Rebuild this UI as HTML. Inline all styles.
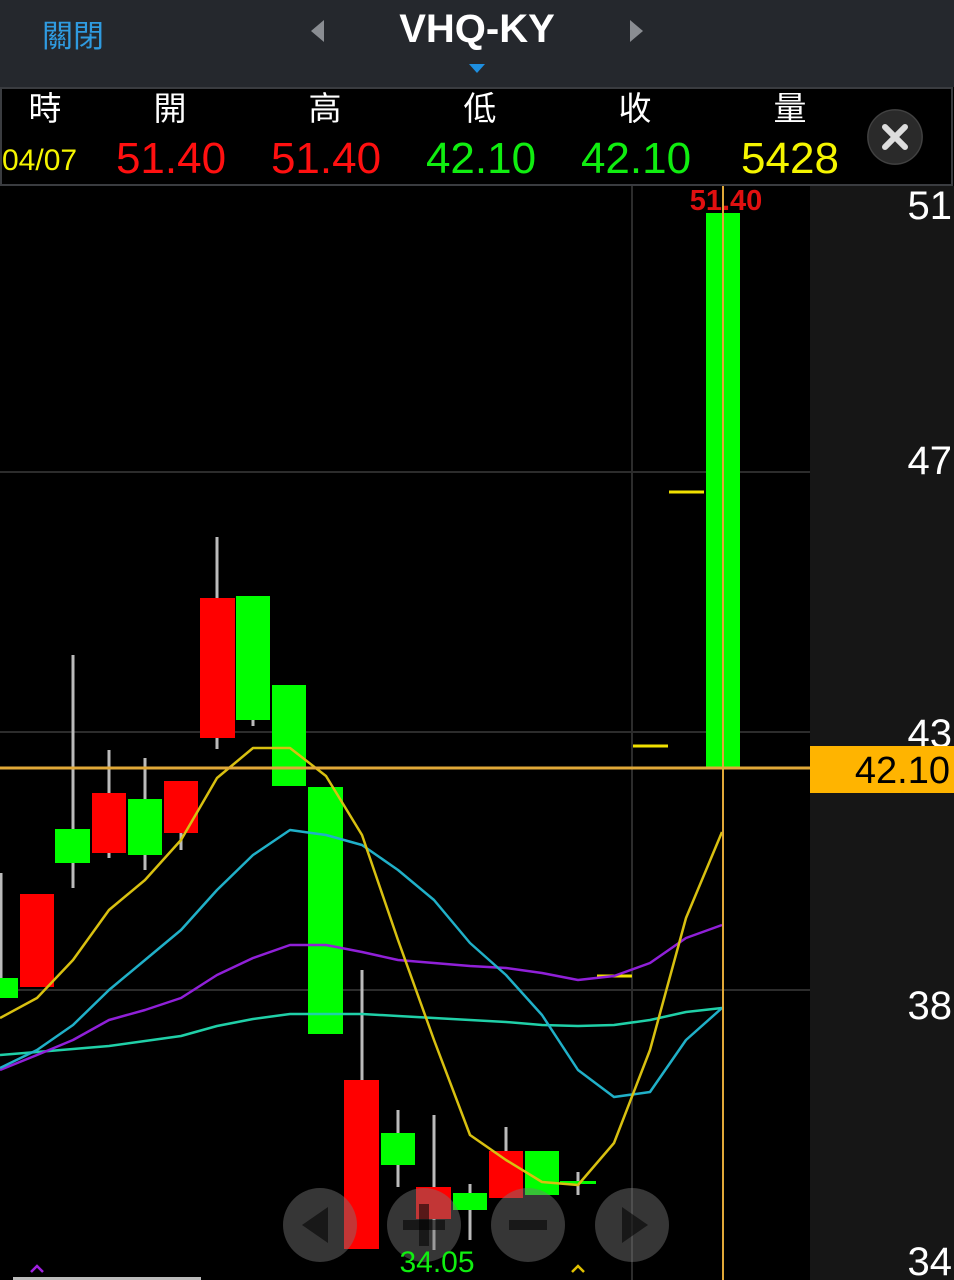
<!DOCTYPE html>
<html><head><meta charset="utf-8"><style>
body{margin:0;width:954px;height:1280px;overflow:hidden;background:#000;font-family:"Liberation Sans","Noto Sans CJK TC",sans-serif;}
</style></head><body>
<svg width="954" height="1280" xmlns="http://www.w3.org/2000/svg" style="position:absolute;left:0;top:0;font-family:'Liberation Sans','Noto Sans CJK TC',sans-serif">
<rect x="0" y="0" width="954" height="87" fill="#25282d"/>
<text x="42" y="47" font-size="31" fill="#2f9be0">關閉</text>
<polygon points="324,20 324,42 311,31" fill="#8a8d92"/>
<polygon points="630,20 630,42 643,31" fill="#8a8d92"/>
<text x="477" y="42" font-size="40" font-weight="bold" fill="#fff" text-anchor="middle">VHQ-KY</text>
<polygon points="469,64 485,64 477,73" fill="#1e8fe0"/>
<rect x="1" y="88" width="951" height="97" fill="#000" stroke="#3a3c40" stroke-width="2"/>
<g font-size="33" fill="#fff" text-anchor="middle">
<text x="45" y="120">時</text><text x="170" y="120">開</text><text x="325" y="120">高</text><text x="480" y="120">低</text><text x="635" y="120">收</text><text x="790" y="120">量</text>
</g>
<text x="2" y="170" font-size="30" fill="#f5f500">04/07</text>
<g font-size="44" text-anchor="middle">
<text x="171" y="173" fill="#ff1010">51.40</text><text x="326" y="173" fill="#ff1010">51.40</text>
<text x="481" y="173" fill="#10ee10">42.10</text><text x="636" y="173" fill="#10ee10">42.10</text>
<text x="790" y="173" fill="#f5f500">5428</text>
</g>
<circle cx="895" cy="137" r="28" fill="#333"/>
<circle cx="895" cy="137" r="27" fill="#2a2a2a" stroke="#444" stroke-width="1"/>
<path d="M885 127 L905 147 M905 127 L885 147" stroke="#ddd" stroke-width="6" stroke-linecap="round"/>
<rect x="810" y="186" width="144" height="1094" fill="#161616"/>
<g stroke="#2c2c2c" stroke-width="2">
<line x1="0" y1="472" x2="810" y2="472"/><line x1="0" y1="732" x2="810" y2="732"/><line x1="0" y1="990" x2="810" y2="990"/>
<line x1="632" y1="186" x2="632" y2="1280"/>
</g>
<g font-size="40" fill="#fff" text-anchor="end">
<text x="952" y="219">51</text><text x="952" y="474">47</text><text x="952" y="747">43</text><text x="952" y="1019">38</text><text x="952" y="1275">34</text>
</g>
<g stroke="#bbb" stroke-width="3">
<line x1="1" y1="873" x2="1" y2="998"/><line x1="73" y1="655" x2="73" y2="888"/><line x1="109" y1="750" x2="109" y2="858"/>
<line x1="145" y1="758" x2="145" y2="870"/><line x1="181" y1="781" x2="181" y2="850"/><line x1="217" y1="537" x2="217" y2="749"/>
<line x1="253" y1="596" x2="253" y2="726"/><line x1="362" y1="970" x2="362" y2="1249"/><line x1="398" y1="1110" x2="398" y2="1187"/>
<line x1="434" y1="1115" x2="434" y2="1250"/><line x1="470" y1="1184" x2="470" y2="1240"/><line x1="506" y1="1127" x2="506" y2="1198"/>
<line x1="578" y1="1172" x2="578" y2="1195"/>
</g>
<g fill="#00ff00">
<rect x="0" y="978" width="18" height="20"/><rect x="55" y="829" width="35" height="34"/><rect x="128" y="799" width="34" height="56"/>
<rect x="236" y="596" width="34" height="124"/><rect x="272" y="685" width="34" height="101"/><rect x="308" y="787" width="35" height="247"/>
<rect x="381" y="1133" width="34" height="32"/><rect x="453" y="1193" width="34" height="17"/><rect x="525" y="1151" width="34" height="44"/>
<rect x="560" y="1181" width="36" height="3"/><rect x="706" y="213" width="34" height="554"/>
</g>
<g fill="#ff0000">
<rect x="20" y="894" width="34" height="93"/><rect x="92" y="793" width="34" height="60"/><rect x="164" y="781" width="34" height="52"/>
<rect x="200" y="598" width="35" height="140"/><rect x="344" y="1080" width="35" height="169"/><rect x="416" y="1187" width="35" height="32"/>
<rect x="489" y="1151" width="34" height="47"/>
</g>
<g stroke="#f0e000" stroke-width="3">
<line x1="597" y1="976" x2="632" y2="976"/><line x1="633" y1="746" x2="668" y2="746"/><line x1="669" y1="492" x2="704" y2="492"/>
</g>
<g fill="none" stroke-width="2.5" stroke-linejoin="round">
<polyline stroke="#20d0a8" points="0,1055 37,1052 73,1049 109,1046 145,1041 181,1036 217,1026 253,1019 290,1014 326,1014 362,1014 398,1016 434,1018 470,1020 506,1022 542,1025 578,1026 614,1025 650,1020 686,1012 722,1008"/>
<polyline stroke="#9020d8" points="0,1070 37,1055 73,1040 109,1020 145,1010 181,998 217,975 253,958 290,945 326,945 362,952 398,960 434,963 470,966 506,968 542,973 578,980 614,976 650,963 686,938 722,925"/>
<polyline stroke="#20b0c8" points="0,1068 37,1050 73,1025 109,990 145,960 181,930 217,890 253,855 290,830 326,835 362,845 398,870 434,900 470,943 506,975 542,1015 578,1070 614,1097 650,1092 686,1040 722,1008"/>
<polyline stroke="#d8c010" points="0,1018 37,998 73,960 109,910 145,880 181,840 217,778 253,748 290,748 326,776 362,835 398,940 434,1040 470,1135 506,1160 542,1182 578,1185 614,1143 650,1050 686,918 722,832"/>
</g>
<line x1="0" y1="768" x2="810" y2="768" stroke="#e0a838" stroke-width="3"/>
<line x1="723" y1="186" x2="723" y2="1280" stroke="#e0a838" stroke-width="2"/>
<rect x="810" y="746" width="144" height="47" fill="#ffb400"/>
<text x="950" y="783" font-size="38" fill="#000" text-anchor="end">42.10</text>
<text x="726" y="210" font-size="29" font-weight="bold" fill="#e01010" text-anchor="middle">51.40</text>
<line x1="723" y1="186" x2="723" y2="213" stroke="#e0a838" stroke-width="2"/>
<g fill="rgba(120,120,120,0.45)">
<circle cx="320" cy="1225" r="37"/><circle cx="424" cy="1225" r="37"/><circle cx="528" cy="1225" r="37"/><circle cx="632" cy="1225" r="37"/>
</g>
<g fill="rgba(0,0,0,0.55)">
<polygon points="328,1207 328,1243 302,1225"/><rect x="403" y="1220" width="42" height="10"/><rect x="419" y="1204" width="10" height="42"/>
<rect x="509" y="1220" width="38" height="10"/><polygon points="622,1207 622,1243 648,1225"/>
</g>
<text x="437" y="1272" font-size="30" fill="#10ee10" text-anchor="middle">34.05</text>
<path d="M31 1272 L37 1266 L43 1272" stroke="#a020e0" stroke-width="2.5" fill="none"/>
<path d="M572 1272 L578 1266 L584 1272" stroke="#e0c000" stroke-width="2.5" fill="none"/>
<rect x="13" y="1277" width="188" height="3" fill="#bbb"/>
</svg>
</body></html>
